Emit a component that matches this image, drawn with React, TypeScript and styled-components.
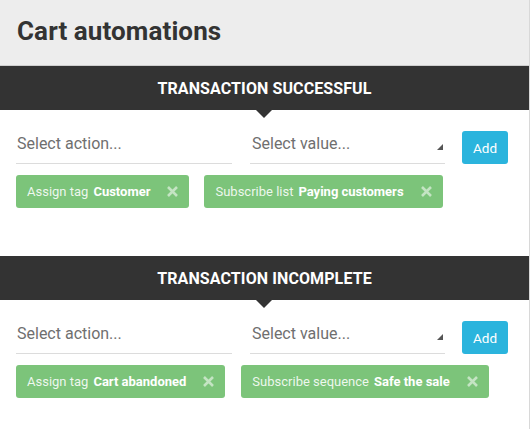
import React from "react";
import styled, { createGlobalStyle } from "styled-components";

const Global = createGlobalStyle`
  html, body { margin: 0; padding: 0; background: #ffffff; }
  body { font-family: Roboto, "Liberation Sans", Arial, sans-serif; }
  * { box-sizing: border-box; }
`;

const Panel = styled.div`
  width: 530px;
  border-right: 1px solid #d8d8d8;
  background: #fff;
`;

const Header = styled.header`
  height: 66px;
  background: #ededed;
  border-bottom: 1px solid #cfcfcf;
  display: flex;
  align-items: center;
  padding: 0 0 3px 17px;
`;

const Title = styled.h1`
  margin: 0;
  font-size: 26px;
  font-weight: 700;
  color: #333;
  letter-spacing: 0.1px;
`;

const Section = styled.section`
  padding-bottom: 48px;
`;

const Bar = styled.div`
  position: relative;
  height: 44px;
  background: #333333;
  color: #fff;
  display: flex;
  align-items: center;
  justify-content: center;
  font-size: 16px;
  font-weight: 700;
  letter-spacing: 0.1px;
  text-transform: uppercase;
  &::after {
    content: "";
    position: absolute;
    left: 50%;
    bottom: -8px;
    margin-left: -9px;
    border-left: 8px solid transparent;
    border-right: 8px solid transparent;
    border-top: 8px solid #333333;
  }
`;

const Body = styled.div`
  padding: 21px 20px 0 16px;
  display: flex;
  flex-direction: column;
  gap: 11px;
`;

const Controls = styled.div`
  display: grid;
  grid-template-columns: 216px 195px 46px;
  column-gap: 18px;
  align-items: stretch;
`;

const Field = styled.div`
  height: 33px;
  border-bottom: 1px solid #dcdcdc;
  display: flex;
  align-items: center;
  justify-content: space-between;
  padding: 0 2px 7px 1px;
  font-size: 16px;
  color: #6f6f6f;
`;

const ValueText = styled.span`
  padding-left: 1px;
`;

const Caret = styled.svg`
  width: 6px;
  height: 6px;
  margin-top: 7px;
`;

const AddButton = styled.button`
  height: 33px;
  width: 46px;
  margin-left: -1px;
  border: none;
  border-radius: 3px;
  background: #2bb4dd;
  color: #fff;
  font-family: inherit;
  font-size: 13.5px;
  padding: 0;
`;

const Tags = styled.div`
  display: flex;
  gap: 15px;
`;

const Tag = styled.div`
  height: 33px;
  border-radius: 3px;
  background: #7cc47a;
  display: flex;
  align-items: center;
  padding: 0 11px;
  font-size: 13px;
  color: rgba(255, 255, 255, 0.88);
`;

const TagLabel = styled.span`
  margin-right: 5px;
`;

const TagValue = styled.span`
  font-weight: 700;
  color: #fff;
`;

const Remove = styled.svg`
  width: 11px;
  height: 11px;
  margin-left: 17px;
`;

type TagData = { label: string; value: string };

const Cross = () => (
  <Remove viewBox="0 0 11 11">
    <path d="M1 1 L10 10 M10 1 L1 10" stroke="rgba(255,255,255,0.55)" strokeWidth="2.6" strokeLinecap="butt" />
  </Remove>
);

const Automation = ({ title, tags, gap }: { title: string; tags: TagData[]; gap: number }) => (
  <Section>
    <Bar>{title}</Bar>
    <Body>
      <Controls>
        <Field>Select action...</Field>
        <Field>
          <ValueText>Select value...</ValueText>
          <Caret viewBox="0 0 6 6">
            <path d="M6 0 L6 6 L0 6 Z" fill="#555" />
          </Caret>
        </Field>
        <AddButton>Add</AddButton>
      </Controls>
      <Tags style={{ gap }}>
        {tags.map((t) => (
          <Tag key={t.value}>
            <TagLabel>{t.label}</TagLabel>
            <TagValue>{t.value}</TagValue>
            <Cross />
          </Tag>
        ))}
      </Tags>
    </Body>
  </Section>
);

export default function App() {
  return (
    <>
      <Global />
      <Panel>
        <Header>
          <Title>Cart automations</Title>
        </Header>
        <Automation
          title="Transaction successful"
          gap={15}
          tags={[
            { label: "Assign tag", value: "Customer" },
            { label: "Subscribe list", value: "Paying customers" },
          ]}
        />
        <Automation
          title="Transaction incomplete"
          gap={16}
          tags={[
            { label: "Assign tag", value: "Cart abandoned" },
            { label: "Subscribe sequence", value: "Safe the sale" },
          ]}
        />
      </Panel>
    </>
  );
}
